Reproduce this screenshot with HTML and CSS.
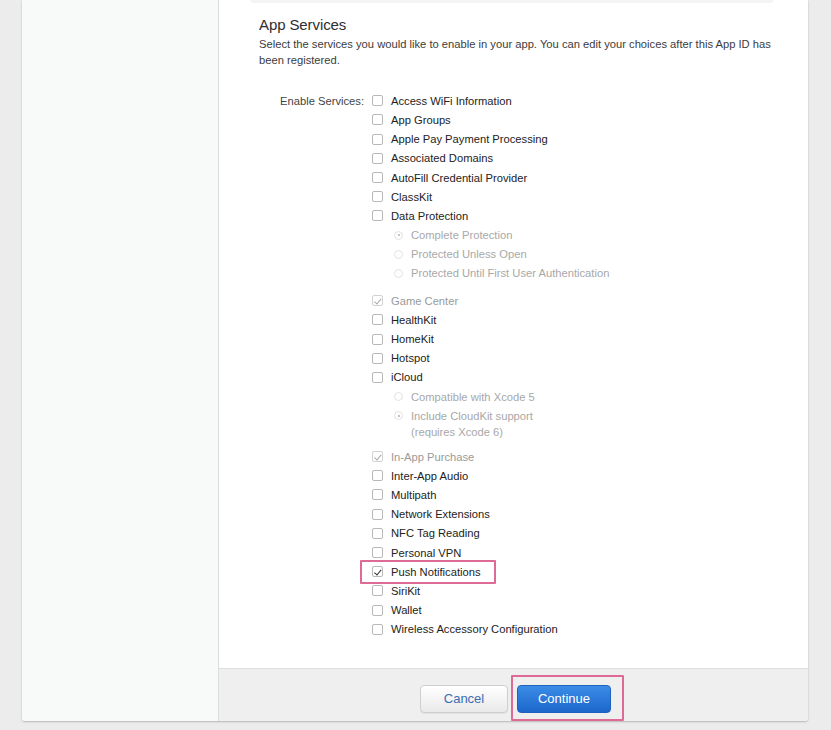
FILE: index.html
```html
<!DOCTYPE html>
<html lang="en">
<head>
<meta charset="utf-8">
<title>App Services</title>
<link rel="stylesheet" href="styles.css">
</head>
<body>
<div class="card">
  <aside class="sidebar"></aside>
  <main class="main">
    <div class="content">
      <div class="prev-section"></div>
      <h2 class="title">App Services</h2>
      <p class="desc">Select the services you would like to enable in your app. You can edit your choices after this App ID has been registered.</p>
      <div class="services">
        <div class="services-label">Enable Services:</div>
        <ul class="list">
          <li class="item"><span class="cb"></span><span>Access WiFi Information</span></li>
          <li class="item"><span class="cb"></span><span>App Groups</span></li>
          <li class="item"><span class="cb"></span><span>Apple Pay Payment Processing</span></li>
          <li class="item"><span class="cb"></span><span>Associated Domains</span></li>
          <li class="item"><span class="cb"></span><span>AutoFill Credential Provider</span></li>
          <li class="item"><span class="cb"></span><span>ClassKit</span></li>
          <li class="item"><span class="cb"></span><span>Data Protection</span></li>
          <li class="item opt"><span class="rb on"></span><span>Complete Protection</span></li>
          <li class="item opt"><span class="rb"></span><span>Protected Unless Open</span></li>
          <li class="item opt group-end"><span class="rb"></span><span>Protected Until First User Authentication</span></li>
          <li class="item disabled"><span class="cb checked"></span><span>Game Center</span></li>
          <li class="item"><span class="cb"></span><span>HealthKit</span></li>
          <li class="item"><span class="cb"></span><span>HomeKit</span></li>
          <li class="item"><span class="cb"></span><span>Hotspot</span></li>
          <li class="item"><span class="cb"></span><span>iCloud</span></li>
          <li class="item opt"><span class="rb"></span><span>Compatible with Xcode 5</span></li>
          <li class="item opt group-end short"><span class="rb on"></span><span>Include CloudKit support<br>(requires Xcode 6)</span></li>
          <li class="item disabled"><span class="cb checked"></span><span>In-App Purchase</span></li>
          <li class="item"><span class="cb"></span><span>Inter-App Audio</span></li>
          <li class="item"><span class="cb"></span><span>Multipath</span></li>
          <li class="item"><span class="cb"></span><span>Network Extensions</span></li>
          <li class="item"><span class="cb"></span><span>NFC Tag Reading</span></li>
          <li class="item"><span class="cb"></span><span>Personal VPN</span></li>
          <li class="item marked"><span class="cb checked"></span><span>Push Notifications</span></li>
          <li class="item"><span class="cb"></span><span>SiriKit</span></li>
          <li class="item"><span class="cb"></span><span>Wallet</span></li>
          <li class="item"><span class="cb"></span><span>Wireless Accessory Configuration</span></li>
        </ul>
      </div>
    </div>
    <footer class="footer">
      <button class="btn btn-cancel" type="button">Cancel</button>
      <button class="btn btn-continue" type="button">Continue</button>
    </footer>
  </main>
</div>
</body>
</html>
```

FILE: styles.css
```css
* { box-sizing: border-box; }

html, body {
  margin: 0;
  padding: 0;
}

body {
  background: #ececec;
  font-family: "Liberation Sans", Arial, sans-serif;
  color: #333;
  width: 831px;
  height: 730px;
  overflow: hidden;
}

.card {
  display: flex;
  margin: 0 23px 0 22px;
  background: #fff;
  border-radius: 0 0 3px 3px;
  box-shadow: 0 1px 2px rgba(0, 0, 0, 0.22), 0 0 1px rgba(0, 0, 0, 0.12);
  overflow: hidden;
}

.sidebar {
  width: 197px;
  flex: none;
  background: #f8f9f9;
  border-right: 1px solid #dcdcdc;
}

.main {
  flex: 1;
  display: flex;
  flex-direction: column;
}

.content {
  padding: 0 22px 28.8px 40px;
}

.prev-section {
  height: 3px;
  margin: 0 13px 0 -9px;
  background: #f4f4f4;
  border-radius: 0 0 3px 3px;
}

.title {
  margin: 12px 0 0;
  font-size: 15px;
  line-height: 20px;
  font-weight: normal;
  color: #2e2e2e;
  letter-spacing: -0.1px;
}

.desc {
  margin: 1px 0 0;
  font-size: 11.2px;
  line-height: 16px;
  color: #3c3c3c;
}

.services {
  display: grid;
  grid-template-columns: 105px 1fr;
  column-gap: 8px;
  margin-top: 23.2px;
  font-size: 11.2px;
}

.services-label {
  text-align: right;
  line-height: 16px;
  padding-top: 1.6px;
  color: #444;
}

.list {
  list-style: none;
  margin: 0;
  padding: 0;
}

.item {
  display: flex;
  align-items: flex-start;
  padding: 1.6px 0;
  line-height: 16px;
  color: #222;
}

.item.disabled { color: #9a9a9a; }

.item.opt { color: #a8a8a8; }

.group-end { margin-bottom: 8px; }
.group-end.short { margin-bottom: 5.6px; }

.cb {
  flex: none;
  width: 11px;
  height: 11px;
  margin: 2.5px 8px 0 0;
  border: 1px solid #b8b8b8;
  border-radius: 2px;
  background: #fff;
  position: relative;
}

.cb.checked::after {
  content: "";
  position: absolute;
  left: 3px;
  top: 0.5px;
  width: 2.5px;
  height: 5.5px;
  border: solid #333;
  border-width: 0 1.2px 1.2px 0;
  transform: rotate(40deg);
}

.disabled .cb { border-color: #d2d2d2; }
.disabled .cb.checked::after { border-color: #a8a8a8; }

.rb {
  flex: none;
  width: 9px;
  height: 9px;
  margin: 3.5px 8px 0 22px;
  border: 1px solid #e2e2e2;
  border-radius: 50%;
  position: relative;
}

.rb.on::after {
  content: "";
  position: absolute;
  left: 2.5px;
  top: 2.5px;
  width: 2px;
  height: 2px;
  border-radius: 50%;
  background: #b0b0b0;
}

.marked {
  position: relative;
  width: fit-content;
}

.marked::after {
  content: "";
  position: absolute;
  left: -12px;
  right: -15px;
  top: -2.4px;
  bottom: -2.4px;
  border: 2px solid #dd6b96;
  border-radius: 1px;
}

.footer {
  display: flex;
  justify-content: center;
  gap: 9px;
  padding: 16px 0 8px 4px;
  background: #efefef;
  border-top: 1px solid #dedede;
}

.btn {
  height: 28px;
  font-family: "Liberation Sans", Arial, sans-serif;
  font-size: 13px;
  border-radius: 4px;
  padding: 0;
  cursor: pointer;
}

.btn-cancel {
  width: 88px;
  color: #3b6db3;
  background: linear-gradient(#ffffff, #e9e9e9);
  border: 1px solid #cfcfcf;
  box-shadow: 0 1px 1px rgba(0, 0, 0, 0.06);
}

.btn-continue {
  width: 94px;
  color: #fff;
  background: linear-gradient(#3a8ce6, #1d66cc);
  border: 1px solid #1f62be;
  position: relative;
}

.btn-continue::after {
  content: "";
  position: absolute;
  left: -7px;
  right: -14px;
  top: -11px;
  bottom: -9px;
  border: 2px solid #dd6b96;
  border-radius: 1px;
}
```
